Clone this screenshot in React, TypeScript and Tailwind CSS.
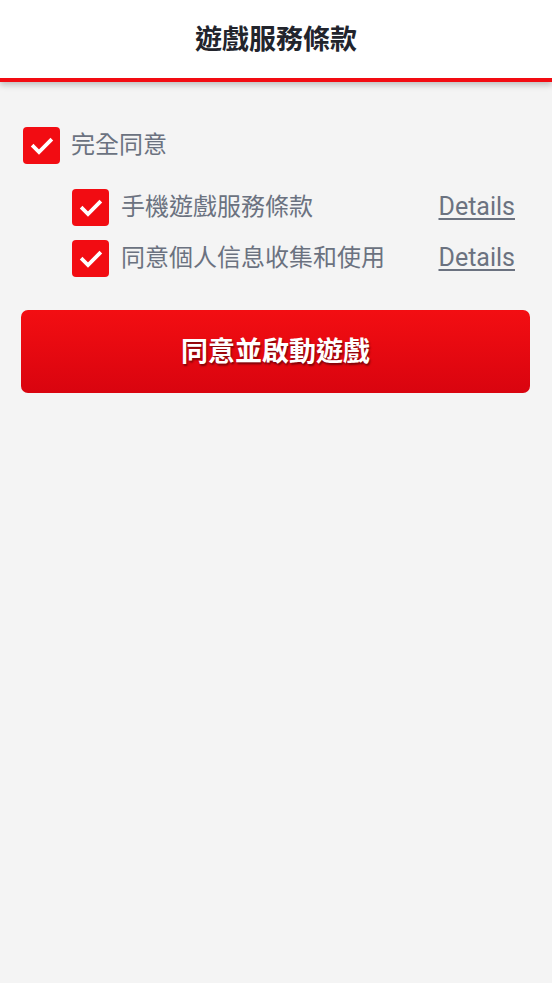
import React from "react";

function Check() {
  return (
    <div className="flex h-[37px] w-[37px] shrink-0 items-center justify-center rounded-[4px] bg-[#f20c12]">
      <svg width="24" height="24" viewBox="0 0 24 24" fill="none">
        <path d="M3.5 12.5l5.5 5.5L20.5 6.5" stroke="white" strokeWidth="3.8" strokeLinecap="square" strokeLinejoin="miter" />
      </svg>
    </div>
  );
}

export default function App() {
  const font = { fontFamily: '"Noto Sans CJK TC", "Noto Sans", sans-serif' };
  return (
    <div className="flex min-h-[983px] w-full flex-col bg-[#f4f4f4]" style={font}>
      <div className="relative z-10 flex h-[82px] flex-col bg-white shadow-[0_3px_6px_rgba(0,0,0,0.22)]">
        <div className="flex h-[78px] items-center justify-center">
          <h1 className="mb-[4px] text-[27px] font-bold leading-none text-[#22242c]">遊戲服務條款</h1>
        </div>
        <div className="h-[4px] bg-[#f20c12]" />
      </div>
      <div className="flex flex-col px-[21px] pt-[45px]">
        <div className="flex items-center gap-[11px] pl-[2px]">
          <Check />
          <span className="mb-[6px] text-[24px] leading-none text-[#6b7280]">完全同意</span>
        </div>
        <div className="mt-[25px] flex flex-col gap-[14px] pl-[51px] pr-[16px]">
          {["手機遊戲服務條款", "同意個人信息收集和使用"].map((t) => (
            <div key={t} className="flex items-center">
              <Check />
              <span className="mb-[6px] ml-[12px] flex-1 text-[24px] leading-none text-[#6b7280]">{t}</span>
              <span
                className="mb-[2px] text-[25px] leading-none text-[#6b7280] underline decoration-2 underline-offset-[3px]"
                style={{ fontFamily: "Roboto, sans-serif" }}
              >
                Details
              </span>
            </div>
          ))}
        </div>
        <button className="mt-[33px] flex h-[83px] w-[509px] items-center justify-center rounded-[7px] bg-gradient-to-b from-[#f30e12] to-[#d9040f]">
          <span className="mb-[4px] text-[27px] font-bold leading-none text-white [text-shadow:1px_2px_2px_rgba(0,0,0,0.45)]">同意並啟動遊戲</span>
        </button>
      </div>
    </div>
  );
}
